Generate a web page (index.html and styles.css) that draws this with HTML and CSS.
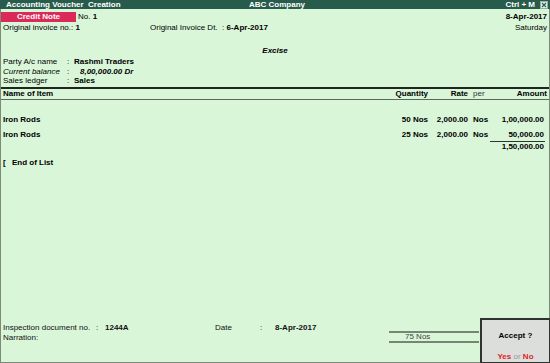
FILE: index.html
```html
<!DOCTYPE html>
<html lang="en">
<head>
    <meta charset="UTF-8">
    <title>Accounting Voucher Creation</title>
    <link rel="stylesheet" href="styles.css">
</head>
<body>
    <div class="window">
        <div class="titlebar">
            <span class="title">Accounting Voucher&nbsp; Creation</span>
            <span class="company">ABC Company</span>
            <span class="shortcut">Ctrl + M
                <svg class="close" width="8" height="8" viewBox="0 0 8 8">
                    <rect x="0.5" y="0.5" width="7" height="7" fill="#e8efe8" stroke="#9aa" />
                    <path d="M2 2 L6 6 M6 2 L2 6" stroke="#264" stroke-width="1.2" />
                </svg>
            </span>
        </div>

        <div class="main">
            <div class="head">
                <div class="head-left">
                    <div class="row-type">
                        <span class="vtype">Credit Note</span>
                        <span class="vno">No. <b>1</b></span>
                    </div>
                    <div class="row-inv">
                        <span>Original invoice no.: <b>1</b></span>
                        <span>Original Invoice Dt. &nbsp;: <b>6-Apr-2017</b></span>
                    </div>
                </div>
                <div class="head-right">
                    <b>8-Apr-2017</b>
                    <span>Saturday</span>
                </div>
            </div>

            <div class="excise">Excise</div>

            <div class="party">
                <span>Party A/c name</span><span>:</span><b>Rashmi Traders</b>
                <i>Current balance</i><span>:</span><b class="balance">8,00,000.00 Dr</b>
                <span>Sales ledger</span><span>:</span><b>Sales</b>
            </div>

            <div class="items-head">
                <b>Name of Item</b>
                <b class="num">Quantity</b>
                <b class="num">Rate</b>
                <span class="per">per</span>
                <b class="num">Amount</b>
            </div>

            <div class="items">
                <div class="item">
                    <b>Iron Rods</b>
                    <b class="num">50 Nos</b>
                    <b class="num">2,000.00</b>
                    <b class="per">Nos</b>
                    <b class="num amt">1,00,000.00</b>
                </div>
                <div class="item">
                    <b>Iron Rods</b>
                    <b class="num">25 Nos</b>
                    <b class="num">2,000.00</b>
                    <b class="per">Nos</b>
                    <b class="num amt">50,000.00</b>
                </div>
                <div class="item total">
                    <span></span><span></span><span></span><span></span>
                    <b class="num amt">1,50,000.00</b>
                </div>
            </div>

            <div class="end-list"><b>[</b> <b class="end-text">End of List</b></div>

            <div class="footer">
                <div class="footer-fields">
                    <span>Inspection document no.</span><span>:</span><b>1244A</b>
                    <span>Date</span><span>:</span><b>8-Apr-2017</b>
                    <span>Narration:</span>
                </div>
                <div class="qty-total">75 Nos</div>
            </div>
        </div>

        <div class="accept">
            <b>Accept ?</b>
            <div class="answers"><b class="red">Yes</b> <span class="or">or</span> <b class="red">No</b></div>
        </div>
    </div>
</body>
</html>
```

FILE: styles.css
```css
body {
    margin: 0;
    font-family: "Liberation Sans", Arial, sans-serif;
    font-size: 8px;
    color: #000;
}

.window {
    position: relative;
    width: 550px;
    height: 363px;
    box-sizing: border-box;
    display: flex;
    flex-direction: column;
    background-color: #d9f6d9;
    border: 1px solid #7c8a7c;
    border-top: none;
}

.titlebar {
    display: grid;
    grid-template-columns: 1fr auto 1fr;
    align-items: center;
    height: 9px;
    margin: 0 -1px;
    padding: 0 2px 0 6px;
    background-color: #275b4b;
    color: #fff;
    font-weight: bold;
    line-height: 9px;
}

.shortcut {
    display: flex;
    align-items: center;
    justify-content: flex-end;
    gap: 5px;
}

.main {
    flex: 1;
    display: flex;
    flex-direction: column;
    padding: 0 2px;
}

.head {
    display: flex;
    justify-content: space-between;
    line-height: 10px;
}

.row-type {
    display: flex;
    align-items: center;
    margin-top: 3px;
}

.vtype {
    width: 75px;
    height: 10px;
    margin-left: -2px;
    background-color: #db2a5a;
    color: #fff;
    font-weight: bold;
    text-align: center;
}

.vno {
    margin-left: 2px;
}

.row-inv {
    display: grid;
    grid-template-columns: 147px auto;
    margin-top: 1px;
}

.head-right {
    display: flex;
    flex-direction: column;
    align-items: flex-end;
    gap: 1px;
    margin-top: 3px;
}

.excise {
    margin-top: 13px;
    line-height: 10px;
    text-align: center;
    font-weight: bold;
    font-style: italic;
}

.party {
    display: grid;
    grid-template-columns: 64px 7px auto;
    line-height: 9.5px;
    margin-top: 1px;
}

.party .balance {
    font-style: italic;
    padding-left: 6px;
}

.items-head,
.item {
    display: grid;
    grid-template-columns: 1fr 50px 40px 22px 57px;
    line-height: 10px;
}

.items-head {
    margin: 1.5px -2px 0;
    padding: 0 2px;
    border-top: 2px solid #1e261e;
    border-bottom: 1px solid #5c665c;
}

.num {
    text-align: right;
}

.per {
    padding-left: 5px;
}

.items-head .per {
    color: #333;
}

.items {
    margin-top: 11.5px;
}

.item {
    line-height: 15px;
}

.item .amt {
    padding-right: 3px;
}

.item.total {
    margin-top: -0.5px;
    line-height: 9px;
}

.item.total .amt {
    margin-right: 2px;
    padding-right: 1px;
    border-top: 1px solid #333;
}

.end-list {
    margin-top: 6.5px;
    line-height: 10px;
}

.end-text {
    margin-left: 4px;
}

.footer {
    margin-top: auto;
    margin-bottom: 19px;
    display: flex;
    align-items: flex-end;
}

.footer-fields {
    display: grid;
    grid-template-columns: 93px 9px 110px 45px 15px auto;
    line-height: 10px;
    color: #111;
}

.qty-total {
    width: 90px;
    height: 12px;
    margin-left: auto;
    margin-right: 68px;
    padding-left: 16px;
    box-sizing: border-box;
    border-top: 2px solid #778577;
    border-bottom: 2px solid #778577;
    line-height: 8px;
    color: #444;
}

.accept {
    position: absolute;
    right: -1px;
    bottom: -1px;
    width: 70px;
    height: 45px;
    box-sizing: border-box;
    display: flex;
    flex-direction: column;
    align-items: center;
    background-color: #dcdedc;
    border: 2px solid #2e332e;
    border-right-width: 1px;
    border-bottom-width: 1px;
    padding-top: 11px;
    line-height: 10px;
}

.answers {
    margin-top: 11px;
}

.red {
    color: #e01e1e;
}

.or {
    color: #999;
}
```
